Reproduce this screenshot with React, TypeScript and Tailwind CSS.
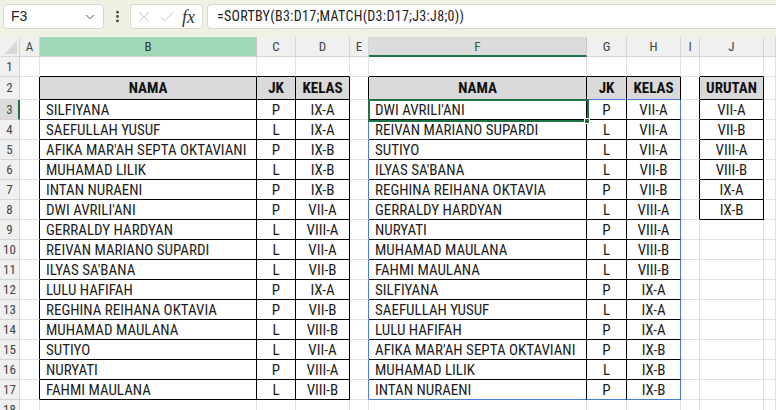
import { ChevronDown, EllipsisVertical, X, Check } from "lucide-react";

const LETTERS = ["", "A", "B", "C", "D", "E", "F", "G", "H", "I", "J", ""];

const LEFT: [string, string, string][] = [
  ["SILFIYANA", "P", "IX-A"],
  ["SAEFULLAH YUSUF", "L", "IX-A"],
  ["AFIKA MAR'AH SEPTA OKTAVIANI", "P", "IX-B"],
  ["MUHAMAD LILIK", "L", "IX-B"],
  ["INTAN NURAENI", "P", "IX-B"],
  ["DWI AVRILI'ANI", "P", "VII-A"],
  ["GERRALDY HARDYAN", "L", "VIII-A"],
  ["REIVAN MARIANO SUPARDI", "L", "VII-A"],
  ["ILYAS SA'BANA", "L", "VII-B"],
  ["LULU HAFIFAH", "P", "IX-A"],
  ["REGHINA REIHANA OKTAVIA", "P", "VII-B"],
  ["MUHAMAD MAULANA", "L", "VIII-B"],
  ["SUTIYO", "L", "VII-A"],
  ["NURYATI", "P", "VIII-A"],
  ["FAHMI MAULANA", "L", "VIII-B"],
];

const SORTED: [string, string, string][] = [
  ["DWI AVRILI'ANI", "P", "VII-A"],
  ["REIVAN MARIANO SUPARDI", "L", "VII-A"],
  ["SUTIYO", "L", "VII-A"],
  ["ILYAS SA'BANA", "L", "VII-B"],
  ["REGHINA REIHANA OKTAVIA", "P", "VII-B"],
  ["GERRALDY HARDYAN", "L", "VIII-A"],
  ["NURYATI", "P", "VIII-A"],
  ["MUHAMAD MAULANA", "L", "VIII-B"],
  ["FAHMI MAULANA", "L", "VIII-B"],
  ["SILFIYANA", "P", "IX-A"],
  ["SAEFULLAH YUSUF", "L", "IX-A"],
  ["LULU HAFIFAH", "P", "IX-A"],
  ["AFIKA MAR'AH SEPTA OKTAVIANI", "P", "IX-B"],
  ["MUHAMAD LILIK", "L", "IX-B"],
  ["INTAN NURAENI", "P", "IX-B"],
];

const URUTAN = ["VII-A", "VII-B", "VIII-A", "VIII-B", "IX-A", "IX-B"];

const RIGHT = { g: "border-r-[#e1e1e1]", k: "border-r-black", b: "border-r-[#4a7ed6]" };
const BOTTOM = { g: "border-b-[#e1e1e1]", k: "border-b-black", b: "border-b-[#4a7ed6]" };

function inTable(c: number, r: number) {
  if ((c >= 2 && c <= 4) || (c >= 6 && c <= 8)) return r >= 2 && r <= 17;
  if (c === 10) return r >= 2 && r <= 8;
  return false;
}

function rightColor(c: number, r: number): keyof typeof RIGHT {
  if (r >= 3 && r <= 17 && (c === 5 || c === 8)) return "b";
  if (inTable(c, r) || inTable(c + 1, r)) return "k";
  return "g";
}

function bottomColor(c: number, r: number): keyof typeof BOTTOM {
  if (c >= 6 && c <= 8 && (r === 2 || r === 17)) return "b";
  if (inTable(c, r) || inTable(c, r + 1)) return "k";
  return "g";
}

function content(c: number, r: number): { text: string; head?: boolean; left?: boolean } | null {
  if (r === 2 && (c === 2 || c === 6)) return { text: "NAMA", head: true };
  if (r === 2 && (c === 3 || c === 7)) return { text: "JK", head: true };
  if (r === 2 && (c === 4 || c === 8)) return { text: "KELAS", head: true };
  if (r === 2 && c === 10) return { text: "URUTAN", head: true };
  if (r >= 3 && r <= 17) {
    const i = r - 3;
    if (c === 2) return { text: LEFT[i][0], left: true };
    if (c === 3) return { text: LEFT[i][1] };
    if (c === 4) return { text: LEFT[i][2] };
    if (c === 6) return { text: SORTED[i][0], left: true };
    if (c === 7) return { text: SORTED[i][1] };
    if (c === 8) return { text: SORTED[i][2] };
    if (c === 10 && r <= 8) return { text: URUTAN[i] };
  }
  return null;
}

const CELL_FONT = "font-['Liberation_Sans_Narrow','Roboto_Condensed','Liberation_Sans',sans-serif]";

function HeaderCell({ c }: { c: number }) {
  if (c === 0) {
    return (
      <div className="relative bg-[#f0f0f0] border-r border-b border-r-[#d4d4d4] border-b-[#d4d4d4]">
        <svg className="absolute right-[2px] bottom-[2px]" width="13" height="13" viewBox="0 0 13 13">
          <polygon points="13,0 13,13 0,13" fill="#d8d8d8" />
        </svg>
      </div>
    );
  }
  if (c === 2) {
    return (
      <div className="flex items-center justify-center bg-[#a0d8b9] border-r border-b border-r-[#c9c9c9] border-b-[#d4d4d4] text-[13px] text-[#333]">
        B
      </div>
    );
  }
  if (c === 6) {
    return (
      <div className="flex items-center justify-center pt-[2px] bg-[#dcdcdc] border-r border-b-2 border-r-[#c9c9c9] border-b-[#217346] text-[13px] text-[#2b5a3d]">
        F
      </div>
    );
  }
  return (
    <div className="flex items-center justify-center bg-[#f0f0f0] border-r border-b border-r-[#d4d4d4] border-b-[#d4d4d4] text-[13px] text-[#444]">
      {LETTERS[c]}
    </div>
  );
}

function RowHead({ r }: { r: number }) {
  if (r === 3) {
    return (
      <div className="flex items-center justify-center pl-px bg-[#dcdcdc] border-r-2 border-b border-r-[#217346] border-b-[#d4d4d4] text-[13px] text-[#2b5a3d]">
        {r}
      </div>
    );
  }
  return (
    <div className="flex items-center justify-center bg-[#f0f0f0] border-r border-b border-r-[#d4d4d4] border-b-[#d4d4d4] text-[13px] text-[#444]">
      {r}
    </div>
  );
}

function Cell({ c, r }: { c: number; r: number }) {
  const v = content(c, r);
  const border = `border-r border-b ${RIGHT[rightColor(c, r)]} ${BOTTOM[bottomColor(c, r)]}`;
  if (!v) return <div className={`bg-white ${border}`} />;
  if (v.head) {
    return (
      <div className={`flex items-center justify-center pt-px bg-[#d9d9d9] font-bold text-[15px] text-[#111] ${border}`}>
        {v.text}
      </div>
    );
  }
  return (
    <div
      className={`flex items-center pt-px bg-white text-[15px] text-[#1c1c1c] whitespace-nowrap overflow-hidden ${
        v.left ? "justify-start pl-[6px]" : "justify-center"
      } ${border}`}
    >
      {v.text}
    </div>
  );
}

export default function App() {
  const rows = Array.from({ length: 18 }, (_, i) => i + 1);
  const cols = Array.from({ length: 12 }, (_, i) => i);

  return (
    <div className="w-[776px] h-[410px] overflow-hidden bg-white font-['Liberation_Sans',sans-serif]">
      {/* Formula bar */}
      <div className="h-[37px] bg-[#f0f1e3] flex items-start pt-[4px] pl-[3px] gap-[4px]">
        <div className="w-[101px] h-[25px] bg-white border border-[#d8d8d0] rounded-[4px] flex items-center justify-between pl-[7px] pr-[6px]">
          <span className="text-[14px] text-[#222]">F3</span>
          <ChevronDown size={14} strokeWidth={1.6} className="text-[#444]" />
        </div>
        <div className="w-[18px] h-[25px] flex items-center justify-center">
          <EllipsisVertical size={15} strokeWidth={2.6} className="text-[#444]" />
        </div>
        <div className="w-[73px] h-[25px] bg-white border border-[#d8d8d0] rounded-[4px] flex items-center pl-[4px] gap-[5px]">
          <X size={18} strokeWidth={1.1} className="text-[#b8b8b8]" />
          <Check size={18} strokeWidth={1.1} className="text-[#b8b8b8]" />
          <span className="ml-[1px] font-['Liberation_Serif',serif] italic text-[18px] text-[#333] leading-none">fx</span>
        </div>
        <div className="flex-1 h-[25px] bg-white border border-r-0 border-[#d8d8d0] rounded-l-[4px] flex items-center pl-[9px]">
          <span className={`text-[14px] tracking-[0.3px] text-[#222] ${CELL_FONT}`}>=SORTBY(B3:D17;MATCH(D3:D17;J3:J8;0))</span>
        </div>
      </div>

      {/* Sheet */}
      <div className="relative">
        <div
          className={`grid grid-cols-[20px_20px_217px_39px_54px_19px_218px_40px_54px_19px_64px_1fr] grid-rows-[20px_20px_23px_repeat(15,20px)_20px] ${CELL_FONT}`}
        >
          {cols.map((c) => (
            <HeaderCell key={`h${c}`} c={c} />
          ))}
          {rows.map((r) =>
            cols.map((c) =>
              c === 0 ? <RowHead key={`${r}-${c}`} r={r} /> : <Cell key={`${r}-${c}`} c={c} r={r} />
            )
          )}
        </div>

        {/* Active cell F3 */}
        <div className="absolute left-[368px] top-[62px] w-[221px] h-[23px] border-2 border-[#217346] pointer-events-none" />
        <div className="absolute left-[584px] top-[81px] w-[6px] h-[6px] bg-[#217346] border border-white pointer-events-none" />
      </div>
    </div>
  );
}
